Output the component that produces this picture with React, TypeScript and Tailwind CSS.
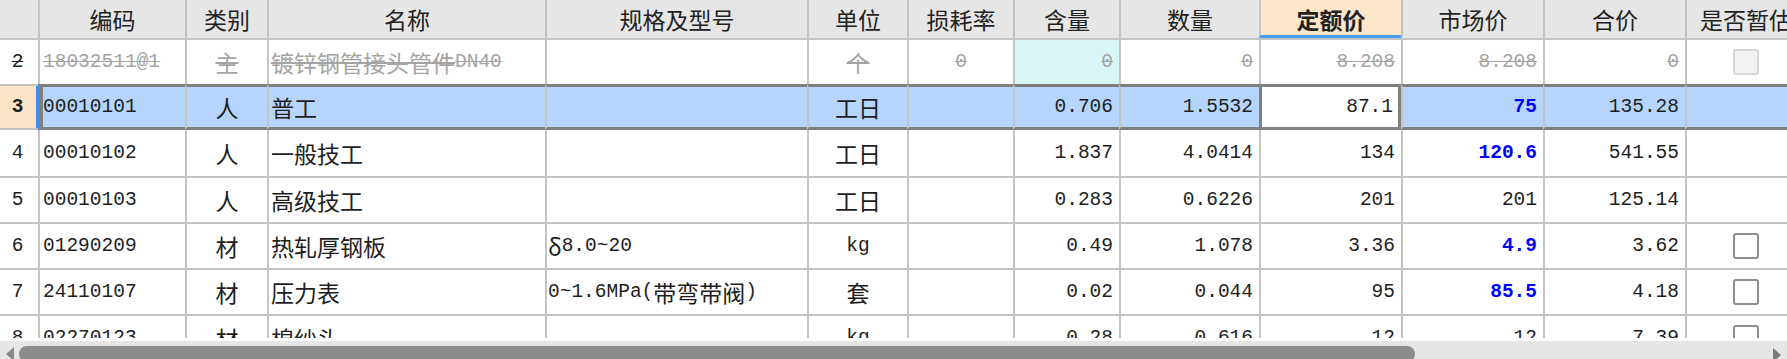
import React from 'react';

// 列宽与参考截图一致（最后一列被窗口截断）
const COLS = 'grid grid-cols-[38px_147px_82px_278px_262px_100px_106px_106px_140px_142px_142px_142px_120px]';

const latin = "font-['Liberation_Mono',monospace] text-[19.5px] leading-[24px]";
const cjk = "font-['Noto_Sans_CJK_SC',sans-serif] text-[23px] leading-[24px]";

// 中英文混排：ASCII 用等宽字体，汉字用黑体
const Txt: React.FC<{ text: string }> = ({ text }) => {
  const parts = text.match(/[\x00-\x7f]+|[^\x00-\x7f]+/g) ?? [];
  return (
    <>
      {parts.map((p, i) => (
        <span key={i} className={/^[\x00-\x7f]/.test(p) ? latin : cjk}>
          {p}
        </span>
      ))}
    </>
  );
};

interface Item {
  no: string;
  code: string;
  kind: string;
  name: string;
  spec: string;
  unit: string;
  loss: string;
  content: string;
  qty: string;
  quota: string;
  market: string;
  marketBlue?: boolean;
  total: string;
  check?: boolean;
}

const rows: Item[] = [
  { no: '4', code: '00010102', kind: '人', name: '一般技工', spec: '', unit: '工日', loss: '', content: '1.837', qty: '4.0414', quota: '134', market: '120.6', marketBlue: true, total: '541.55' },
  { no: '5', code: '00010103', kind: '人', name: '高级技工', spec: '', unit: '工日', loss: '', content: '0.283', qty: '0.6226', quota: '201', market: '201', total: '125.14' },
  { no: '6', code: '01290209', kind: '材', name: '热轧厚钢板', spec: 'δ8.0~20', unit: 'kg', loss: '', content: '0.49', qty: '1.078', quota: '3.36', market: '4.9', marketBlue: true, total: '3.62', check: true },
  { no: '7', code: '24110107', kind: '材', name: '压力表', spec: '0~1.6MPa(带弯带阀)', unit: '套', loss: '', content: '0.02', qty: '0.044', quota: '95', market: '85.5', marketBlue: true, total: '4.18', check: true },
  { no: '8', code: '02270123', kind: '材', name: '棉纱头', spec: '', unit: 'kg', loss: '', content: '0.28', qty: '0.616', quota: '12', market: '12', total: '7.39', check: true },
];

const heads = ['', '编码', '类别', '名称', '规格及型号', '单位', '损耗率', '含量', '数量', '定额价', '市场价', '合价', '是否暂估'];

const Box: React.FC<{ disabled?: boolean }> = ({ disabled }) => (
  <div
    className={
      disabled
        ? 'w-[26px] h-[26px] rounded-[3px] border-2 border-[#d6d6d6] bg-[#f1f1f1]'
        : 'w-[26px] h-[26px] rounded-[3px] border-2 border-[#8e8e8e] bg-white'
    }
  />
);

const Header = () => (
  <div className={`${COLS} h-[38px] bg-[#e6e6e6] text-[#222]`}>
    {heads.map((h, i) => (
      <div
        key={i}
        className={
          i === 0
            ? 'flex items-center justify-center'
            : i === 9
            ? 'flex items-center justify-center border-l-2 border-l-[#c4c4c4] border-b-[3px] border-b-[#4a9cf3] bg-[#fee6cb] font-bold pt-[3px]'
            : 'flex items-center justify-center overflow-hidden whitespace-nowrap border-l-2 border-l-[#c4c4c4]'
        }
      >
        <Txt text={h} />
      </div>
    ))}
  </div>
);

const cell = 'flex items-center overflow-hidden whitespace-nowrap border-l-2 border-l-[#c4c4c4] border-t-2 border-t-[#c4c4c4]';

// 第 2 行：已删除（删除线、灰色）
const DeletedRow = () => (
  <div className={`${COLS} h-[46px]`}>
    <div className="flex items-center justify-center pr-[3px] border-t-2 border-t-[#c4c4c4] line-through text-[#222]">
      <Txt text="2" />
    </div>
    <div className={`${cell} pl-[3px] line-through text-[#a4a4a4]`}><Txt text="18032511@1" /></div>
    <div className={`${cell} justify-center line-through text-[#a4a4a4]`}><Txt text="主" /></div>
    <div className={`${cell} pl-[2px] line-through text-[#a4a4a4]`}><Txt text="镀锌钢管接头管件DN40" /></div>
    <div className={cell} />
    <div className={`${cell} justify-center line-through text-[#a4a4a4]`}><Txt text="个" /></div>
    <div className={`${cell} justify-center line-through text-[#a4a4a4]`}><Txt text="0" /></div>
    <div className={`${cell} justify-end pr-[6px] bg-[#d8f6f6] line-through text-[#a4a4a4]`}><Txt text="0" /></div>
    <div className={`${cell} justify-end pr-[6px] line-through text-[#a4a4a4]`}><Txt text="0" /></div>
    <div className={`${cell} justify-end pr-[6px] line-through text-[#a4a4a4]`}><Txt text="8.208" /></div>
    <div className={`${cell} justify-end pr-[6px] line-through text-[#a4a4a4]`}><Txt text="8.208" /></div>
    <div className={`${cell} justify-end pr-[6px] line-through text-[#a4a4a4]`}><Txt text="0" /></div>
    <div className={`${cell} justify-center`}><Box disabled /></div>
  </div>
);

const sel = 'flex items-center overflow-hidden whitespace-nowrap border-l-2 border-l-[#c4c4c4] border-y-[3px] border-y-[#7f7f7f] bg-[#b5d5fc]';

// 第 3 行：当前选中行，定额价为编辑焦点
const SelectedRow = () => (
  <div className={`${COLS} h-[46px] text-[#1e1e1e]`}>
    <div className="flex items-center justify-center pr-[3px] border-y-2 border-y-[#c4c4c4] bg-[#fde4c8] font-bold shadow-[inset_-2px_0_0_#3f8cf0]">
      <Txt text="3" />
    </div>
    <div className="flex items-center overflow-hidden whitespace-nowrap border-l-2 border-l-[#3f8cf0] border-y-[3px] border-y-[#7f7f7f] bg-[#b5d5fc] pl-[3px] shadow-[inset_3px_0_0_#7f7f7f]">
      <Txt text="00010101" />
    </div>
    <div className={`${sel} justify-center`}><Txt text="人" /></div>
    <div className={`${sel} pl-[2px]`}><Txt text="普工" /></div>
    <div className={sel} />
    <div className={`${sel} justify-center`}><Txt text="工日" /></div>
    <div className={sel} />
    <div className={`${sel} justify-end pr-[6px]`}><Txt text="0.706" /></div>
    <div className={`${sel} justify-end pr-[6px]`}><Txt text="1.5532" /></div>
    <div className="flex items-center justify-end pr-[5px] overflow-hidden whitespace-nowrap border-[3px] border-[#7f7f7f] bg-white">
      <Txt text="87.1" />
    </div>
    <div className={`${sel} justify-end pr-[6px] text-[#0000ff] font-bold`}><Txt text="75" /></div>
    <div className={`${sel} justify-end pr-[6px]`}><Txt text="135.28" /></div>
    <div className={sel} />
  </div>
);

const DataRow: React.FC<{ r: Item; first?: boolean }> = ({ r, first }) => {
  const c = first
    ? 'flex items-center overflow-hidden whitespace-nowrap border-l-2 border-l-[#c4c4c4]'
    : cell;
  return (
    <div className={`${COLS} h-[46px] text-[#1e1e1e]`}>
      <div className={first ? 'flex items-center justify-center pr-[3px]' : 'flex items-center justify-center pr-[3px] border-t-2 border-t-[#c4c4c4]'}>
        <Txt text={r.no} />
      </div>
      <div className={`${c} pl-[3px]`}><Txt text={r.code} /></div>
      <div className={`${c} justify-center`}><Txt text={r.kind} /></div>
      <div className={`${c} pl-[2px]`}><Txt text={r.name} /></div>
      <div className={`${c} pl-[1px]`}><Txt text={r.spec} /></div>
      <div className={`${c} justify-center`}><Txt text={r.unit} /></div>
      <div className={`${c} justify-center`}><Txt text={r.loss} /></div>
      <div className={`${c} justify-end pr-[6px]`}><Txt text={r.content} /></div>
      <div className={`${c} justify-end pr-[6px]`}><Txt text={r.qty} /></div>
      <div className={`${c} justify-end pr-[6px]`}><Txt text={r.quota} /></div>
      <div className={`${c} justify-end pr-[6px] ${r.marketBlue ? 'text-[#0000ff] font-bold' : ''}`}>
        <Txt text={r.market} />
      </div>
      <div className={`${c} justify-end pr-[6px]`}><Txt text={r.total} /></div>
      <div className={`${c} justify-center`}>{r.check && <Box />}</div>
    </div>
  );
};

const ScrollBar = () => (
  <div className="h-[18px] bg-[#e6e6e6] flex items-start overflow-hidden">
    <div className="w-[19px] h-full flex justify-center pt-[6px]">
      <svg width="8" height="14" viewBox="0 0 8 14">
        <polygon points="8,0 0,7 8,14" fill="#8a8a8a" />
      </svg>
    </div>
    <div className="w-[1396px] h-[16px] mt-[5px] rounded-[8px] bg-[#8c8c8c]" />
    <div className="flex-1" />
    <div className="w-[21px] h-full flex justify-center pt-[7px]">
      <svg width="8" height="14" viewBox="0 0 8 14">
        <polygon points="0,0 8,7 0,14" fill="#7a7a7a" />
      </svg>
    </div>
  </div>
);

export default function App() {
  return (
    <div className="w-[1787px] h-[359px] overflow-hidden bg-white flex flex-col">
      <div className="h-[338px] overflow-hidden">
        <Header />
        <DeletedRow />
        <SelectedRow />
        {rows.map((r, i) => (
          <DataRow key={r.no} r={r} first={i === 0} />
        ))}
      </div>
      <div className="h-[3px] bg-white" />
      <ScrollBar />
    </div>
  );
}
